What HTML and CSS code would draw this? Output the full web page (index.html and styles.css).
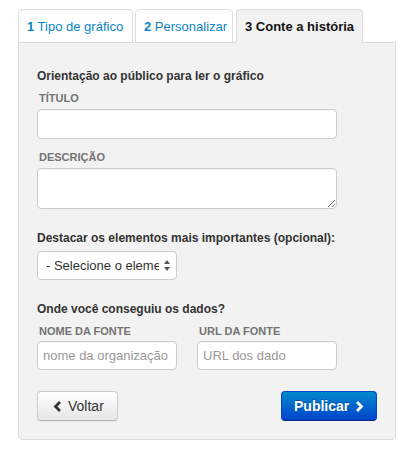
FILE: index.html
```html
<!DOCTYPE html>
<html lang="pt">
<head>
<meta charset="utf-8">
<link rel="stylesheet" href="styles.css">
</head>
<body>
<div class="wrap">
  <ul class="tabs">
    <li class="tab"><span><b>1</b> Tipo de gráfico</span></li>
    <li class="tab"><span><b>2</b> Personalizar</span></li>
    <li class="tab active"><span><b>3 Conte a história</b></span></li>
  </ul>
  <div class="panel">
    <h4 class="heading">Orientação ao público para ler o gráfico</h4>
    <label class="lbl">TÍTULO</label>
    <input class="field wide" type="text">
    <label class="lbl lbl-gap">DESCRIÇÃO</label>
    <textarea class="field wide area"></textarea>
    <h4 class="heading sect">Destacar os elementos mais importantes (opcional):</h4>
    <div class="select">
      <span class="sel-text">- Selecione o elemento</span>
      <svg class="sel-arrows" width="6" height="11" viewBox="0 0 6 11"><path d="M3 0 L6 4 L0 4 Z M3 11 L6 7 L0 7 Z" fill="#555"/></svg>
    </div>
    <h4 class="heading sect">Onde você conseguiu os dados?</h4>
    <div class="cols">
      <div class="col">
        <label class="lbl">NOME DA FONTE</label>
        <input class="field half" type="text" placeholder="nome da organização">
      </div>
      <div class="col">
        <label class="lbl">URL DA FONTE</label>
        <input class="field half" type="text" placeholder="URL dos dado">
      </div>
    </div>
    <div class="actions">
      <button class="btn btn-default"><svg width="9" height="11" viewBox="0 0 9 11"><path d="M7 1 L2.5 5.5 L7 10" fill="none" stroke="#333" stroke-width="2.8"/></svg><span>Voltar</span></button>
      <button class="btn btn-primary"><span>Publicar</span><svg width="9" height="11" viewBox="0 0 9 11"><path d="M2 1 L6.5 5.5 L2 10" fill="none" stroke="#fff" stroke-width="2.8"/></svg></button>
    </div>
  </div>
</div>
</body>
</html>
```
FILE: styles.css
```css
* { box-sizing: border-box; }
body {
  margin: 0;
  background: #fff;
  font-family: "Liberation Sans", Arial, Helvetica, sans-serif;
  color: #333;
}
.wrap {
  padding: 9px 18px 0 18px;
  width: 414px;
}
.tabs {
  list-style: none;
  margin: 0;
  padding: 0;
  display: flex;
  gap: 2px;
  position: relative;
  z-index: 1;
  margin-bottom: -1px;
}
.tab {
  height: 34px;
  padding: 0 8px;
  display: flex;
  align-items: center;
  font-size: 13px;
  color: #0a86c9;
  background: #fff;
  border: 1px solid #ddd;
  border-radius: 4px 4px 0 0;
  white-space: nowrap;
}
.tab:nth-child(1) { width: 115px; }
.tab:nth-child(2) { width: 98px; }
.tab:nth-child(3) { width: 127px; margin-left: 1px; }
.tab.active {
  background: #f2f2f2;
  color: #111;
  border-bottom-color: #f2f2f2;
}
.panel {
  width: 378px;
  background: #f2f2f2;
  border: 1px solid #ddd;
  border-radius: 0 0 4px 4px;
  padding: 24px 18px 18px 18px;
}
.heading {
  margin: 0;
  font-size: 12px;
  line-height: 18px;
  font-weight: bold;
  color: #333;
}
.sect { margin-top: 20px; }
.lbl {
  display: block;
  font-size: 11px;
  line-height: 18px;
  font-weight: bold;
  color: #737373;
  padding-left: 2px;
  margin-top: 4px;
}
.lbl-gap { margin-top: 9px; }
.field {
  display: block;
  background: #fff;
  border: 1px solid #ccc;
  border-radius: 4px;
  font-family: inherit;
  font-size: 13px;
  color: #555;
  padding: 0 6px;
  margin: 2px 0 0 0;
  outline: none;
  box-shadow: inset 0 1px 1px rgba(0,0,0,0.05);
}
.field::placeholder { color: #999; }
.wide { width: 300px; height: 30px; }
.area { height: 41px; resize: vertical; }
.select {
  margin-top: 4px;
  width: 140px;
  height: 29px;
  background: #fff;
  border: 1px solid #ccc;
  border-radius: 4px;
  display: flex;
  align-items: center;
  padding: 0 0 0 8px;
  font-size: 13px;
  color: #333;
}
.sel-text {
  width: 113px;
  overflow: hidden;
  white-space: nowrap;
}
.sel-arrows { margin-left: 5px; }
.cols {
  display: flex;
  gap: 20px;
}
.col .lbl { margin-top: 4px; }
.half { width: 140px; height: 29px; margin-top: 1px; padding: 0 5px; }
.actions {
  margin-top: 21px;
  display: flex;
  justify-content: space-between;
  width: 340px;
}
.btn {
  height: 30px;
  border-radius: 4px;
  font-family: inherit;
  font-size: 14px;
  display: flex;
  align-items: center;
  gap: 6px;
  cursor: pointer;
}
.btn-default {
  width: 81px;
  padding: 0 0 0 15px;
  color: #333;
  background: linear-gradient(#ffffff, #e6e6e6);
  border: 1px solid #ccc;
  border-bottom-color: #b3b3b3;
  box-shadow: inset 0 1px 0 rgba(255,255,255,0.2), 0 1px 2px rgba(0,0,0,0.05);
}
.btn-primary {
  width: 96px;
  padding: 0 0 0 12px;
  font-weight: bold;
  color: #fff;
  background: linear-gradient(#0088cc, #0044cc);
  border: 1px solid #0044cc;
  border-bottom-color: #002a80;
  text-shadow: 0 -1px 0 rgba(0,0,0,0.25);
}
```
